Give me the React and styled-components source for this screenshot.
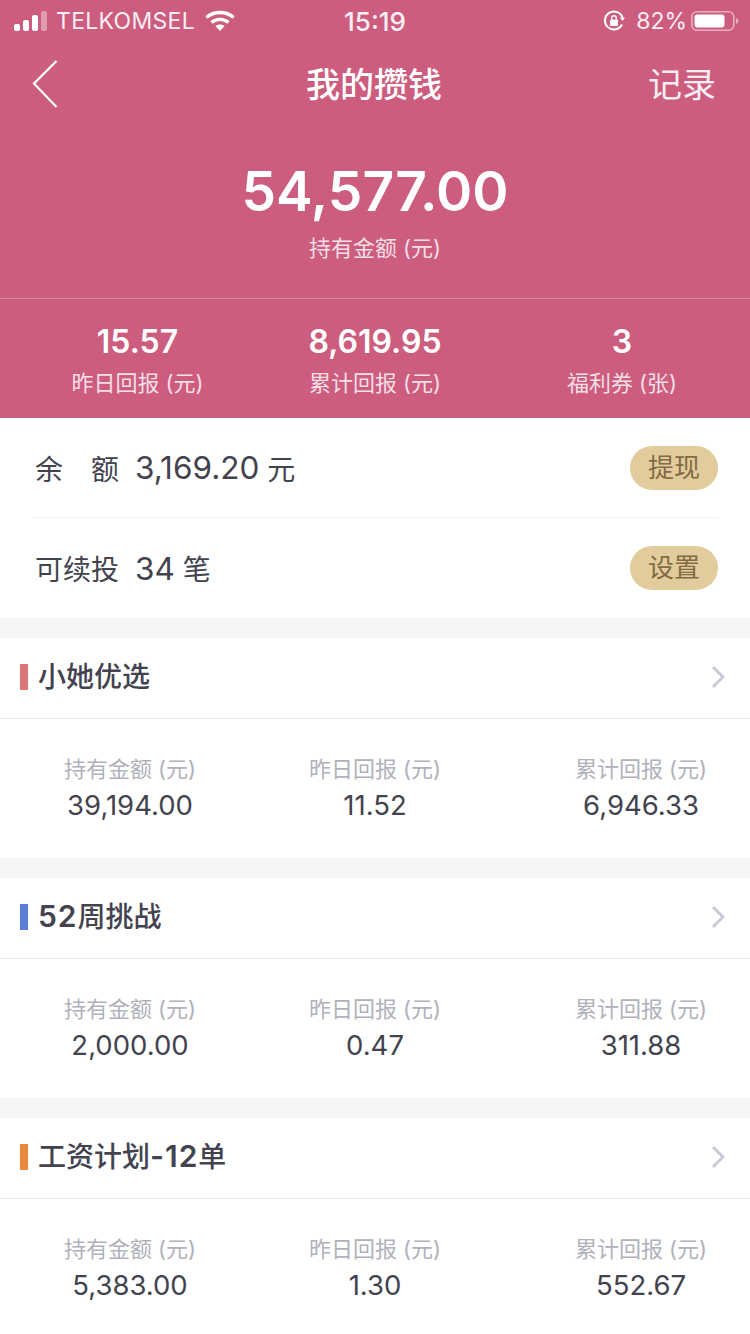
import React from "react";
import styled, { createGlobalStyle } from "styled-components";

const GlobalStyle = createGlobalStyle`
  html, body { margin: 0; padding: 0; background: #f5f5f5; }
  body { font-family: Inter, "Noto Sans CJK SC", sans-serif; }
  * { box-sizing: border-box; }
`;

const Page = styled.div`
  width: 750px;
  height: 1334px;
  overflow: hidden;
  background: #f5f5f5;
`;

const Hero = styled.header`
  height: 418px;
  background: #cc5d7e;
  color: #fff;
`;

const StatusBar = styled.div`
  height: 42px;
  padding: 0 11px;
  display: grid;
  grid-template-columns: 1fr auto 1fr;
  align-items: center;
  font-size: 23px;
  color: #fbeef2;
`;

const StatusLeft = styled.div`
  display: flex;
  align-items: center;
  gap: 10px;
  padding-left: 3px;
`;

const StatusRight = styled.div`
  display: flex;
  align-items: center;
  justify-content: flex-end;
  gap: 4px;
`;

const BatteryText = styled.span`
  margin-left: 7px;
`;

const Carrier = styled.span`
  margin-left: -2px;
  font-size: 23px;
  letter-spacing: 0.3px;
`;

const Clock = styled.span`
  font-size: 26px;
  font-weight: 500;
`;

const NavBar = styled.nav`
  height: 84px;
  padding: 0 34px 0 32px;
  display: grid;
  grid-template-columns: 1fr auto 1fr;
  align-items: center;
`;

const NavTitle = styled.h1`
  margin: 0 0 4px;
  font-size: 34px;
  font-weight: 500;
`;

const NavAction = styled.span`
  justify-self: end;
  margin-bottom: 4px;
  font-size: 34px;
  color: #fbeef2;
`;

const Balance = styled.div`
  height: 173px;
  padding-top: 30px;
  display: flex;
  flex-direction: column;
  align-items: center;
  border-bottom: 1px solid rgba(255, 255, 255, 0.25);
`;

const BalanceValue = styled.div`
  font-size: 55px;
  line-height: 70px;
  font-weight: 600;
`;

const BalanceLabel = styled.div`
  margin-top: 7px;
  font-size: 22px;
  line-height: 30px;
  color: #f7dfe6;
`;

const HeroStats = styled.div`
  height: 119px;
  padding: 24px 8px 0 5px;
  display: grid;
  grid-template-columns: 265px 210px 1fr;
`;

const HeroStat = styled.div`
  display: flex;
  flex-direction: column;
  align-items: center;

  &:last-child {
    padding-left: 22px;
  }
`;

const HeroStatValue = styled.div`
  font-size: 32px;
  line-height: 38px;
  font-weight: 600;
`;

const HeroStatLabel = styled.div`
  margin-top: 7px;
  font-size: 22px;
  line-height: 30px;
  color: #f7dfe6;
`;

const AccountPanel = styled.section`
  height: 200px;
  margin-bottom: 20px;
  padding: 0 32px;
  background: #fff;
`;

const AccountRow = styled.div`
  height: 99px;
  display: flex;
  align-items: center;
  justify-content: space-between;
  color: #43434f;

  & + & {
    height: 101px;
    border-top: 1px solid #f0f0f0;
  }
`;

const AccountText = styled.div`
  display: flex;
  align-items: center;
  gap: 16px;
  padding-left: 3px;
`;

const AccountKey = styled.span`
  width: 84px;
  font-size: 28px;
  display: flex;
  justify-content: space-between;
`;

const AccountAmount = styled.span`
  display: flex;
  align-items: center;
  gap: 8px;
  font-size: 31.5px;
`;

const AccountUnit = styled.span`
  font-size: 28px;
`;

const PillButton = styled.button`
  width: 88px;
  height: 44px;
  padding: 0;
  border: 0;
  border-radius: 22px;
  background: #e2cc9d;
  color: #826a43;
  font-family: inherit;
  font-size: 26px;
  line-height: 44px;
`;

const PlanCard = styled.section`
  margin-bottom: 20px;
  background: #fff;
`;

const PlanHeader = styled.div`
  height: 81px;
  padding: 0 25px 0 20px;
  display: flex;
  align-items: center;
  border-bottom: 1px solid #e8e8e8;

  svg {
    margin-bottom: 2px;
  }
`;

const PlanMark = styled.i`
  width: 8px;
  height: 26px;
  margin: 0 10px 2px 0;
  background: ${(p) => p.$color};
`;

const PlanTitle = styled.h2`
  flex: 1;
  margin: 0 0 6px;
  font-size: 28px;
  font-weight: 500;
  color: #43434f;
`;

const PlanTitleDigits = styled.span`
  font-size: 30px;
  font-weight: 600;
  letter-spacing: 1px;
`;

const PlanMetrics = styled.div`
  height: 139px;
  padding-top: 35px;
  display: grid;
  grid-template-columns: 260px 230px 1fr;
`;

const Metric = styled.div`
  display: flex;
  flex-direction: column;
  align-items: center;

  &:last-child {
    padding-left: 42px;
  }
`;

const MetricLabel = styled.div`
  font-size: 22px;
  line-height: 30px;
  color: #b1b1bb;
`;

const MetricValue = styled.div`
  margin-top: 3px;
  font-size: 27.5px;
  line-height: 36px;
  color: #43434f;
`;

const plans = [
  { title: ["小她优选"], color: "#de7878", values: ["39,194.00", "11.52", "6,946.33"] },
  { title: ["52", "周挑战"], color: "#5b7fd6", values: ["2,000.00", "0.47", "311.88"] },
  { title: ["工资计划", "-12", "单"], color: "#ea8a3c", values: ["5,383.00", "1.30", "552.67"] },
];

const metricLabels = ["持有金额 (元)", "昨日回报 (元)", "累计回报 (元)"];

function SignalIcon() {
  return (
    <svg width="34" height="22" viewBox="0 0 34 22">
      <rect x="0" y="14" width="6" height="7" rx="2" fill="#fff" />
      <rect x="9" y="10" width="6" height="11" rx="2" fill="#fff" />
      <rect x="18" y="5" width="6" height="16" rx="2" fill="#fff" />
      <rect x="27" y="1" width="6" height="20" rx="2" fill="#fff" opacity="0.4" />
    </svg>
  );
}

function WifiIcon() {
  return (
    <svg width="30" height="22" viewBox="0 0 30 22" fill="none" stroke="#fff" strokeWidth="3.4">
      <path d="M1.5 7.5C9 .8 21 .8 28.5 7.5" />
      <path d="M6.5 12.5c4.8-4.2 12.2-4.2 17 0" />
      <path d="M15 21l-4.6-5c2.6-2 6.6-2 9.2 0z" fill="#fff" stroke="none" />
    </svg>
  );
}

function LockIcon() {
  return (
    <svg width="22" height="22" viewBox="0 0 22 22" fill="none">
      <path d="M19 14.5A9 9 0 1 1 19.6 8" stroke="#fff" strokeWidth="2" />
      <path d="M17 7.5h5L19.5 11z" fill="#fff" />
      <rect x="7" y="9.5" width="8" height="6.5" rx="1" fill="#fff" />
      <path d="M8.7 9.5V8a2.3 2.3 0 0 1 4.6 0v1.5" stroke="#fff" strokeWidth="1.4" />
    </svg>
  );
}

function BatteryIcon() {
  return (
    <svg width="48" height="22" viewBox="0 0 48 22">
      <rect x="0.8" y="1.8" width="42" height="18.4" rx="5" fill="none" stroke="#fff" strokeOpacity="0.5" strokeWidth="1.6" />
      <rect x="3.5" y="4.5" width="30" height="13" rx="3" fill="#fff" />
      <path d="M45 8c1.6.4 2.4 1.6 2.4 3s-.8 2.6-2.4 3z" fill="#fff" opacity="0.5" />
    </svg>
  );
}

function BackIcon() {
  return (
    <svg width="26" height="50" viewBox="0 0 26 50" fill="none" stroke="#fff" strokeWidth="2.2">
      <path d="M24.5 2 2 24.5 24.5 48" />
    </svg>
  );
}

function ChevronIcon() {
  return (
    <svg width="14" height="24" viewBox="0 0 14 24" fill="none" stroke="#c9cad3" strokeWidth="3">
      <path d="M2 2l10 10L2 22" />
    </svg>
  );
}

function renderTitle(parts) {
  return parts.map((part) =>
    /[0-9]/.test(part) ? <PlanTitleDigits key={part}>{part}</PlanTitleDigits> : part
  );
}

export default function App() {
  return (
    <Page>
      <GlobalStyle />
      <Hero>
        <StatusBar>
          <StatusLeft>
            <SignalIcon />
            <Carrier>TELKOMSEL</Carrier>
            <WifiIcon />
          </StatusLeft>
          <Clock>15:19</Clock>
          <StatusRight>
            <LockIcon />
            <BatteryText>82%</BatteryText>
            <BatteryIcon />
          </StatusRight>
        </StatusBar>
        <NavBar>
          <BackIcon />
          <NavTitle>我的攒钱</NavTitle>
          <NavAction>记录</NavAction>
        </NavBar>
        <Balance>
          <BalanceValue>54,577.00</BalanceValue>
          <BalanceLabel>持有金额 (元)</BalanceLabel>
        </Balance>
        <HeroStats>
          <HeroStat>
            <HeroStatValue>15.57</HeroStatValue>
            <HeroStatLabel>昨日回报 (元)</HeroStatLabel>
          </HeroStat>
          <HeroStat>
            <HeroStatValue>8,619.95</HeroStatValue>
            <HeroStatLabel>累计回报 (元)</HeroStatLabel>
          </HeroStat>
          <HeroStat>
            <HeroStatValue>3</HeroStatValue>
            <HeroStatLabel>福利券 (张)</HeroStatLabel>
          </HeroStat>
        </HeroStats>
      </Hero>
      <AccountPanel>
        <AccountRow>
          <AccountText>
            <AccountKey>
              <span>余</span>
              <span>额</span>
            </AccountKey>
            <AccountAmount>
              3,169.20
              <AccountUnit>元</AccountUnit>
            </AccountAmount>
          </AccountText>
          <PillButton>提现</PillButton>
        </AccountRow>
        <AccountRow>
          <AccountText>
            <AccountKey>可续投</AccountKey>
            <AccountAmount>
              34
              <AccountUnit>笔</AccountUnit>
            </AccountAmount>
          </AccountText>
          <PillButton>设置</PillButton>
        </AccountRow>
      </AccountPanel>
      {plans.map((plan) => (
        <PlanCard key={plan.color}>
          <PlanHeader>
            <PlanMark $color={plan.color} />
            <PlanTitle>{renderTitle(plan.title)}</PlanTitle>
            <ChevronIcon />
          </PlanHeader>
          <PlanMetrics>
            {plan.values.map((value, i) => (
              <Metric key={metricLabels[i]}>
                <MetricLabel>{metricLabels[i]}</MetricLabel>
                <MetricValue>{value}</MetricValue>
              </Metric>
            ))}
          </PlanMetrics>
        </PlanCard>
      ))}
    </Page>
  );
}
